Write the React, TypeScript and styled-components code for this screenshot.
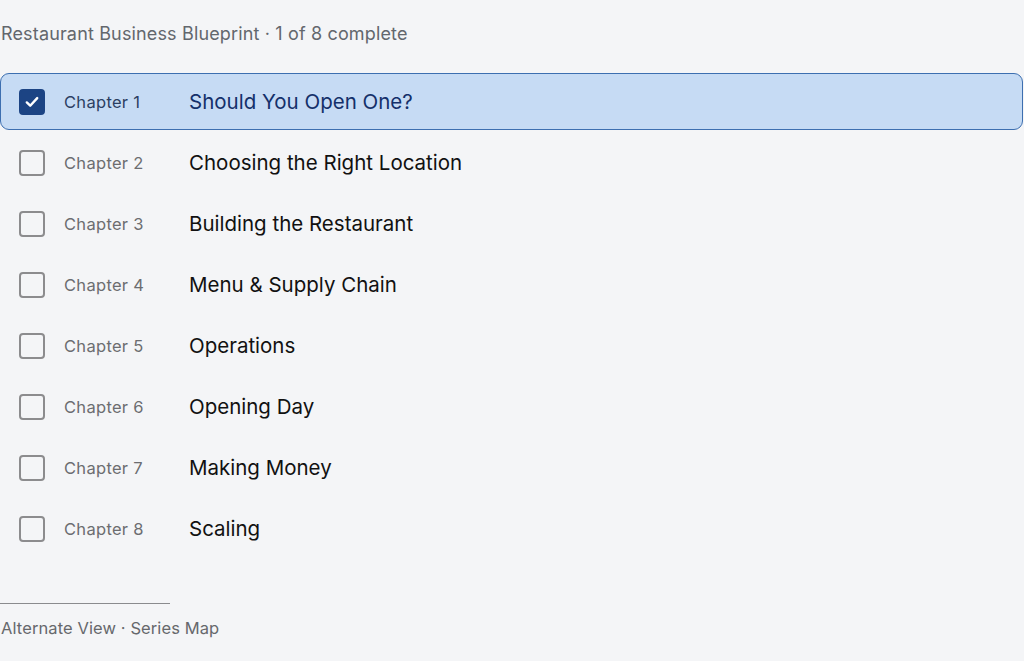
import React from "react";
import styled, { createGlobalStyle } from "styled-components";

const Global = createGlobalStyle`
  html, body { margin: 0; padding: 0; background: #f4f5f7; }
  body { font-family: Inter, "Liberation Sans", Arial, sans-serif; -webkit-font-smoothing: antialiased; }
`;

const Page = styled.div`
  width: 1024px;
  height: 661px;
  background: #f4f5f7;
  display: flex;
  flex-direction: column;
  box-sizing: border-box;
  padding-top: 24px;
`;

const Header = styled.div`
  font-size: 18px;
  letter-spacing: 0.15px;
  line-height: 20px;
  color: #63676d;
  padding-left: 1px;
  margin-bottom: 29px;
`;

const List = styled.div`
  display: flex;
  flex-direction: column;
  gap: 4px;
`;

const Row = styled.div<{ $active?: boolean }>`
  height: 57px;
  box-sizing: border-box;
  display: flex;
  align-items: center;
  padding-left: 18px;
  border-radius: 9px;
  border: 1px solid ${(p) => (p.$active ? "#3d6fb0" : "transparent")};
  background: ${(p) => (p.$active ? "#c6dbf4" : "transparent")};
  width: 1023px;
`;

const Box = styled.div<{ $checked?: boolean }>`
  width: 26px;
  height: 26px;
  box-sizing: border-box;
  border-radius: 4px;
  border: 2px solid ${(p) => (p.$checked ? "#1c4484" : "#8c8c8e")};
  background: ${(p) => (p.$checked ? "#1c4484" : "transparent")};
  display: flex;
  align-items: center;
  justify-content: center;
  flex-shrink: 0;
`;

const Label = styled.div<{ $active?: boolean }>`
  width: 125px;
  margin-left: 19px;
  font-size: 16.5px;
  letter-spacing: 0.3px;
  color: ${(p) => (p.$active ? "#2c3f62" : "#6c6d70")};
`;

const Title = styled.div<{ $active?: boolean }>`
  font-size: 20.5px;
  color: ${(p) => (p.$active ? "#14306a" : "#111111")};
`;

const Footer = styled.div`
  margin-top: 46px;
  display: flex;
  flex-direction: column;
`;

const Rule = styled.div`
  width: 170px;
  height: 1px;
  background: #8a8b8e;
`;

const FooterText = styled.div`
  margin-top: 14px;
  font-size: 16.5px;
  letter-spacing: 0.1px;
  color: #66686c;
  padding-left: 1px;
`;

const chapters = [
  "Should You Open One?",
  "Choosing the Right Location",
  "Building the Restaurant",
  "Menu & Supply Chain",
  "Operations",
  "Opening Day",
  "Making Money",
  "Scaling",
];

export default function App() {
  return (
    <Page>
      <Global />
      <Header>Restaurant Business Blueprint · 1 of 8 complete</Header>
      <List>
        {chapters.map((t, i) => {
          const active = i === 0;
          return (
            <Row key={t} $active={active}>
              <Box $checked={active}>
                {active && (
                  <svg width="18" height="18" viewBox="0 0 18 18" fill="none">
                    <path d="M3.8 9.4l3.4 3.3 7-7.6" stroke="#fff" strokeWidth="2.4" strokeLinecap="round" strokeLinejoin="round" />
                  </svg>
                )}
              </Box>
              <Label $active={active}>Chapter {i + 1}</Label>
              <Title $active={active}>{t}</Title>
            </Row>
          );
        })}
      </List>
      <Footer>
        <Rule />
        <FooterText>Alternate View · Series Map</FooterText>
      </Footer>
    </Page>
  );
}
